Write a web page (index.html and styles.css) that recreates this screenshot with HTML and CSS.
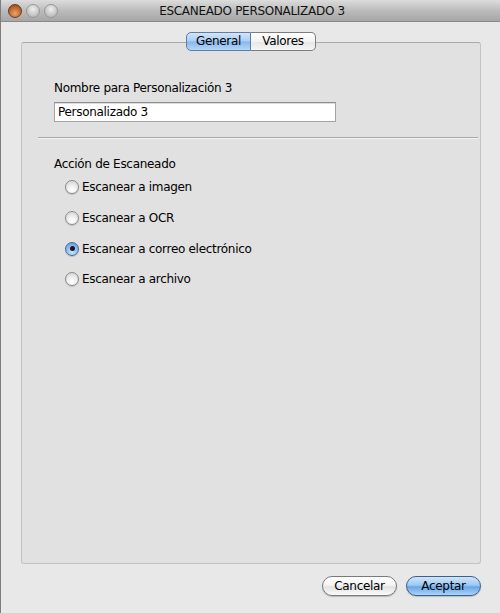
FILE: index.html
```html
<!DOCTYPE html>
<html lang="es">
<head>
<meta charset="utf-8">
<title>ESCANEADO PERSONALIZADO 3</title>
<link rel="stylesheet" href="styles.css">
</head>
<body>
<div class="window">
  <div class="titlebar">
    <div class="lights">
      <span class="light light-close"></span>
      <span class="light"></span>
      <span class="light"></span>
    </div>
    <div class="title">ESCANEADO PERSONALIZADO 3</div>
  </div>
  <div class="content">
    <div class="tabs">
      <div class="tab tab-active">General</div>
      <div class="tab">Valores</div>
    </div>
    <div class="panel">
      <div class="section">
        <div class="label">Nombre para Personalización 3</div>
        <div class="field">Personalizado 3</div>
      </div>
      <div class="separator"></div>
      <div class="section">
        <div class="label">Acción de Escaneado</div>
        <div class="radios">
          <div class="radio-row"><span class="radio"></span><span>Escanear a imagen</span></div>
          <div class="radio-row"><span class="radio"></span><span>Escanear a OCR</span></div>
          <div class="radio-row"><span class="radio radio-on"><span class="dot"></span></span><span>Escanear a correo electrónico</span></div>
          <div class="radio-row"><span class="radio"></span><span>Escanear a archivo</span></div>
        </div>
      </div>
    </div>
    <div class="footer">
      <div class="btn">Cancelar</div>
      <div class="btn btn-default">Aceptar</div>
    </div>
  </div>
</div>
</body>
</html>
```

FILE: styles.css
```css
* { box-sizing: border-box; }
html, body { margin: 0; padding: 0; }
body {
  font-family: "DejaVu Sans", "Liberation Sans", sans-serif;
  font-size: 12px;
  letter-spacing: -0.3px;
  color: #000;
  background: #e8e8e8;
}
.window {
  width: 500px;
  height: 613px;
  background: #e8e8e8;
  border-left: 1px solid #7c7c7c;
  display: flex;
  flex-direction: column;
  overflow: hidden;
}
.titlebar {
  height: 22px;
  flex: none;
  background: linear-gradient(#dcdcdc, #bcbcbc 50%, #a6a6a6);
  border-bottom: 1px solid #8a8a8a;
  display: flex;
  align-items: center;
}
.lights {
  display: flex;
  gap: 4px;
  padding-left: 7px;
}
.light {
  width: 14px;
  height: 14px;
  border-radius: 50%;
  background: radial-gradient(circle at 50% 35%, #efefef, #c6c6c6 60%, #aaaaaa);
  border: 1px solid #979797;
}
.light-close {
  background: radial-gradient(circle at 50% 70%, #eaa46a, #bd6a33 55%, #83411a);
  border-color: #6c3a1c;
}
.title {
  flex: 1;
  text-align: center;
  font-size: 12px;
  color: #111;
  margin-right: 54px;
}
.content {
  flex: 1;
  padding: 10px 19px 0 19px;
  display: flex;
  flex-direction: column;
}
.tabs {
  display: flex;
  justify-content: center;
  height: 19px;
  margin-bottom: -9px;
  position: relative;
  z-index: 1;
  padding-left: 1px;
}
.tab {
  width: 65px;
  height: 19px;
  line-height: 17px;
  text-align: center;
  border: 1px solid #7d7d7d;
  background: linear-gradient(#ffffff, #f3f3f3 50%, #e6e6e6 52%, #f6f6f6);
  color: #000;
}
.tab-active {
  border-radius: 5px 0 0 5px;
  background: linear-gradient(#d2e5fa, #a9cdf3 48%, #86b7ea 52%, #b2d8fb);
  border-color: #5f7ea6;
}
.tab:last-child {
  border-radius: 0 5px 5px 0;
  border-left: none;
}
.panel {
  height: 522px;
  flex: none;
  margin-left: 1px;
  background: #e1e1e1;
  border: 1px solid #c3c3c3;
  border-top-color: #a9a9a9;
  border-radius: 3px;
  padding: 37px 2px 0 16px;
}
.section {
  padding-left: 16px;
}
.label {
  line-height: 16px;
  height: 16px;
}
.field {
  margin-top: 6px;
  width: 282px;
  height: 20px;
  line-height: 18px;
  background: #fff;
  border: 1px solid #a4a4a4;
  border-top-color: #8e8e8e;
  padding-left: 3px;
  box-shadow: inset 0 1px 0 #dcdcdc;
}
.separator {
  margin-top: 15px;
  margin-bottom: 17px;
  height: 2px;
  border-top: 1px solid #a9a9a9;
  border-bottom: 1px solid #f2f2f2;
}
.radios {
  padding-left: 11px;
}
.radio-row {
  height: 30.67px;
  display: flex;
  align-items: center;
  gap: 3px;
}
.radio {
  width: 14px;
  height: 14px;
  border-radius: 50%;
  border: 1px solid #8a8a8a;
  background: radial-gradient(circle at 50% 75%, #ffffff, #f0f0f0 40%, #cfcfcf);
  box-shadow: 0 1px 1px rgba(0,0,0,0.15);
  display: flex;
  align-items: center;
  justify-content: center;
  flex: none;
}
.radio-on {
  border-color: #4d6b94;
  background: radial-gradient(circle at 50% 75%, #c8e4ff, #8dbdf0 50%, #5c93d6);
}
.dot {
  width: 5px;
  height: 5px;
  border-radius: 50%;
  background: #1a1a1a;
}
.footer {
  margin-top: 12px;
  display: flex;
  justify-content: flex-end;
  gap: 9px;
}
.btn {
  width: 75px;
  height: 20px;
  line-height: 18px;
  text-align: center;
  border-radius: 10px;
  border: 1px solid #7a7a7a;
  background: linear-gradient(#ffffff, #f4f4f4 45%, #e2e2e2 55%, #fbfbfb);
  box-shadow: 0 1px 1px rgba(0,0,0,0.2);
}
.btn-default {
  border-color: #3f5f8c;
  background: linear-gradient(#cfe5fb, #9ccaf3 45%, #6aa7e4 55%, #a8d4fb);
}
```
